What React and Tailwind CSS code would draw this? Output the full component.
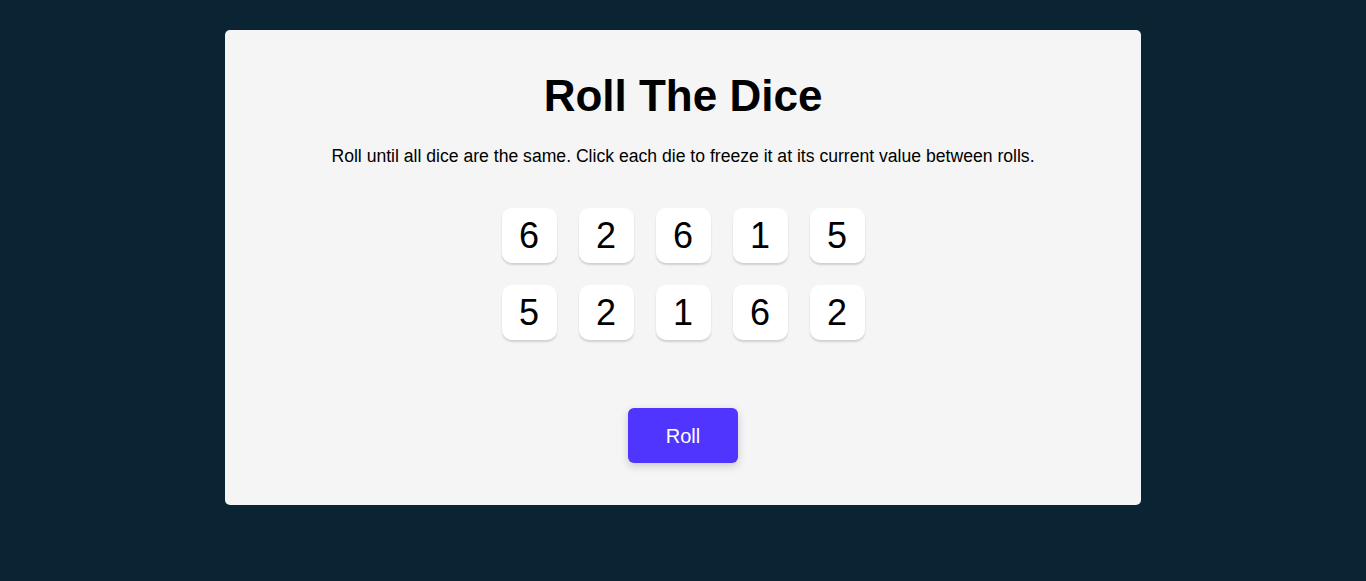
import { useState } from 'react'

const initialDice = [6, 2, 6, 1, 5, 5, 2, 1, 6, 2]

const Die = ({ value, held, onClick }) => (
  <button
    type="button"
    onClick={onClick}
    className={`w-[55px] h-[55px] rounded-[10px] flex items-center justify-center text-[36px] leading-none text-black shadow-[0_2px_2px_rgba(0,0,0,0.15)] cursor-pointer ${
      held ? 'bg-[#59E391]' : 'bg-white'
    }`}
  >
    {value}
  </button>
)

export default function App() {
  const [dice, setDice] = useState(
    initialDice.map((value, id) => ({ id, value, held: false }))
  )

  const toggle = (id) =>
    setDice((prev) => prev.map((d) => (d.id === id ? { ...d, held: !d.held } : d)))

  const roll = () =>
    setDice((prev) =>
      prev.map((d) => (d.held ? d : { ...d, value: Math.ceil(Math.random() * 6) }))
    )

  return (
    <div className="min-h-[581px] bg-[#0B2434] pt-[30px] font-['Liberation_Sans',Arial,sans-serif]">
      <main className="mx-auto w-[916px] bg-[#F5F5F5] rounded-[5px] flex flex-col items-center pt-[41px] pb-[42px]">
        <h1 className="text-[44px] leading-[50px] font-bold text-black">Roll The Dice</h1>
        <p className="mt-[25px] text-[17.6px] leading-5 text-black">
          Roll until all dice are the same. Click each die to freeze it at its current value between rolls.
        </p>

        <div className="mt-[42px] grid grid-cols-5 gap-[22px]">
          {dice.map((d) => (
            <Die key={d.id} value={d.value} held={d.held} onClick={() => toggle(d.id)} />
          ))}
        </div>

        <button
          type="button"
          onClick={roll}
          className="mt-[68px] w-[110px] h-[55px] rounded-[6px] bg-[#5035FF] text-white text-[20px] shadow-[0_3px_8px_rgba(0,0,0,0.18)] cursor-pointer"
        >
          Roll
        </button>
      </main>
    </div>
  )
}
